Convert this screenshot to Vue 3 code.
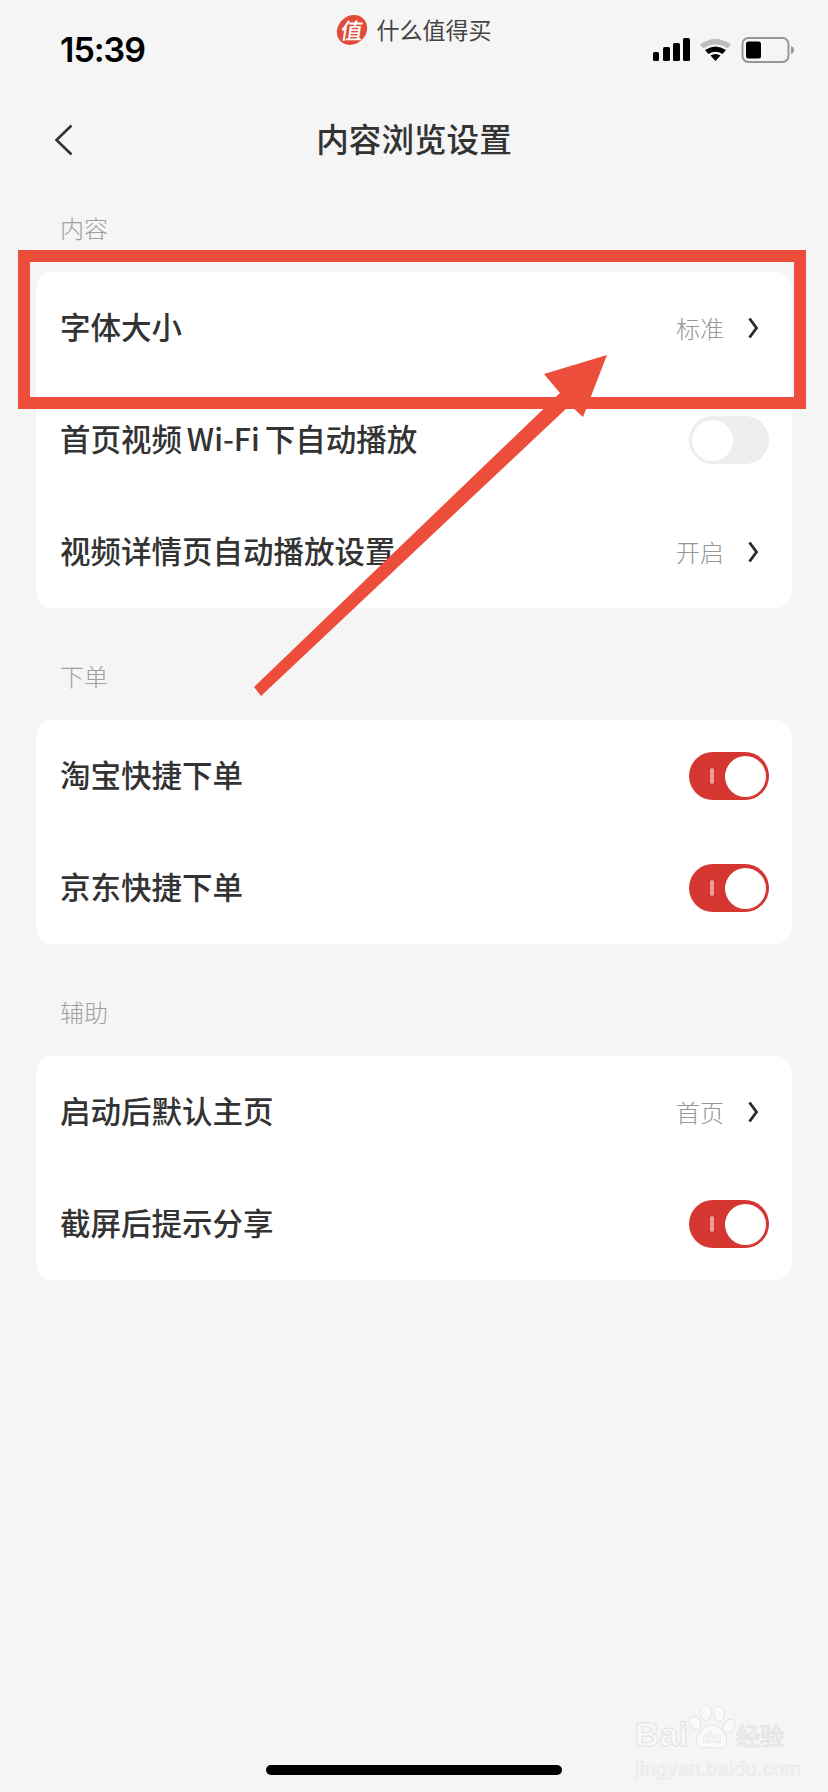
<script setup>
const groups = [
  {
    title: '内容',
    rows: [
      { label: '字体大小', value: '标准' },
      { label: '首页视频 Wi-Fi 下自动播放', on: false },
      { label: '视频详情页自动播放设置', value: '开启' }
    ]
  },
  {
    title: '下单',
    rows: [
      { label: '淘宝快捷下单', on: true },
      { label: '京东快捷下单', on: true }
    ]
  },
  {
    title: '辅助',
    rows: [
      { label: '启动后默认主页', value: '首页' },
      { label: '截屏后提示分享', on: true }
    ]
  }
]
</script>

<template>
  <div class="page">
    <header class="status">
      <span class="time">15:39</span>
      <div class="source">
        <span class="logo">值</span>
        <span class="source-name">什么值得买</span>
      </div>
      <svg class="status-icons" width="142" height="26" viewBox="0 0 142 26">
        <rect x="1" y="15" width="6" height="9" rx="1.5" fill="#000" />
        <rect x="11" y="10" width="7" height="14" rx="1.5" fill="#000" />
        <rect x="21" y="6" width="7" height="18" rx="1.5" fill="#000" />
        <rect x="31" y="1" width="7" height="23" rx="1.5" fill="#000" />
        <path d="M48 7.5 Q63.5 -3.5 79 7.5 L75.5 11.5 Q63.5 3.5 51.5 11.5 Z" fill="#bdbdbd" />
        <path d="M53 13 Q63.5 6 74 13 L70.5 17 Q63.5 12.5 56.5 17 Z" fill="#000" />
        <path d="M58.5 18.5 Q63.5 15.5 68.5 18.5 L63.5 24 Z" fill="#000" />
        <rect x="90.5" y="1" width="46" height="24" rx="6" fill="none" stroke="#969696" stroke-width="2" />
        <rect x="94" y="4.5" width="15" height="17" rx="2.5" fill="#000" />
        <path d="M139 9 Q142 10 142 13 Q142 16 139 17 Z" fill="#969696" />
      </svg>
    </header>

    <nav class="nav">
      <svg class="back" width="20" height="32" viewBox="0 0 20 32">
        <path d="M17.5 1.5 L2.5 16 L17.5 30.5" fill="none" stroke="#333" stroke-width="2.6" />
      </svg>
      <h1 class="nav-title">内容浏览设置</h1>
    </nav>

    <section v-for="group in groups" :key="group.title" class="group">
      <div class="group-title">{{ group.title }}</div>
      <div class="card">
        <div v-for="row in group.rows" :key="row.label" class="row">
          <span class="row-label">{{ row.label }}</span>
          <template v-if="row.value">
            <span class="row-value">{{ row.value }}</span>
            <svg class="chevron" width="12" height="22" viewBox="0 0 12 22">
              <path d="M2.5 1.5 L9.5 11 L2.5 20.5" fill="none" stroke="#2b2b2b" stroke-width="2.8" />
            </svg>
          </template>
          <span v-else class="switch" :class="{ on: row.on }">
            <i v-if="row.on" class="switch-mark"></i>
            <i class="knob"></i>
          </span>
        </div>
      </div>
    </section>

    <div class="home-bar"></div>

    <!-- annotation drawn over the screenshot -->
    <svg class="annotation" width="828" height="720" viewBox="0 0 828 720">
      <rect x="24" y="256" width="776" height="147" fill="none" stroke="#ec4e3b" stroke-width="12" />
      <path d="M607 355 L544 374 L560 393 L254 687 L261 696 L570 405 L583 417 Z" fill="#ec4e3b" />
    </svg>

    <div class="watermark">
      <div class="wm-top">
        <span class="wm-bai">Bai</span>
        <svg class="wm-paw" width="46" height="46" viewBox="0 0 46 46">
          <g fill="#fafafa" stroke="#e4e4e4" stroke-width="1">
            <ellipse cx="6" cy="18" rx="5.5" ry="7" transform="rotate(-30 6 18)" />
            <ellipse cx="17" cy="8" rx="5.5" ry="7.5" />
            <ellipse cx="30" cy="9" rx="5.5" ry="7.5" />
            <ellipse cx="40" cy="21" rx="5.5" ry="7" transform="rotate(25 40 21)" />
            <path d="M23 20 C31 20 40 31 37 39 C34 46 27 42 23 42 C18 42 11 46 8 39 C5 31 15 20 23 20 Z" />
          </g>
          <text x="23" y="38" class="wm-du">du</text>
        </svg>
        <span class="wm-cn">经验</span>
      </div>
      <div class="wm-url">jingyan.baidu.com</div>
    </div>
  </div>
</template>

<style scoped>
* {
  box-sizing: border-box;
}
.page {
  position: relative;
  width: 828px;
  height: 1792px;
  overflow: hidden;
  background: #f5f5f5;
  font-family: "Noto Sans CJK SC", "Liberation Sans", sans-serif;
  color: #333;
}
.status {
  display: grid;
  grid-template-columns: 1fr auto 1fr;
  height: 100px;
  padding: 0 34px;
}
.time {
  margin: 27px 0 0 26px;
  font: 600 34px/46px "Inter", "Liberation Sans", sans-serif;
  letter-spacing: -1px;
  color: #000;
}
.source {
  display: flex;
  align-items: center;
  gap: 10px;
  height: 32px;
  margin-top: 14px;
}
.logo {
  width: 30px;
  height: 30px;
  border-radius: 50%;
  background: #e04c38;
  color: #fff;
  font-size: 22px;
  line-height: 29px;
  text-align: center;
  font-weight: 500;
  transform: skewX(-8deg);
}
.source-name {
  margin-top: -2px;
  font-size: 23px;
  line-height: 32px;
  color: #444;
}
.status-icons {
  justify-self: end;
  margin-top: 37px;
}
.nav {
  position: relative;
  display: flex;
  align-items: center;
  justify-content: center;
  height: 80px;
}
.back {
  position: absolute;
  left: 54px;
  top: 24px;
}
.nav-title {
  margin: -4px 0 0;
  font-size: 32.6px;
  line-height: 44px;
  font-weight: 500;
  color: #333;
}
.group {
  padding: 32px 36px 20px;
}
.group-title {
  height: 34px;
  margin-bottom: 26px;
  padding-left: 24px;
  font-size: 24px;
  line-height: 32px;
  font-weight: 300;
  color: #9f9f9f;
}
.card {
  background: #fff;
  border-radius: 16px;
}
.row {
  display: flex;
  align-items: center;
  height: 112px;
  padding: 0 23px 0 24px;
}
.row-label {
  flex: 1;
  margin-top: -4px;
  font-size: 30.5px;
  line-height: 42px;
  font-weight: 500;
  word-spacing: -2px;
  color: #333;
}
.row-value {
  font-size: 24px;
  line-height: 34px;
  font-weight: 300;
  color: #969696;
}
.chevron {
  margin: 0 10px 0 23px;
}
.switch {
  position: relative;
  display: flex;
  align-items: center;
  justify-content: flex-start;
  width: 80px;
  height: 48px;
  padding: 3px;
  border-radius: 24px;
  background: #eee;
}
.switch.on {
  justify-content: flex-end;
  background: #d4372f;
}
.switch-mark {
  position: absolute;
  left: 21px;
  top: 16px;
  width: 4px;
  height: 16px;
  border-radius: 2px;
  background: #ee9a96;
}
.knob {
  width: 41px;
  height: 41px;
  border-radius: 50%;
  background: #fff;
}
.home-bar {
  position: absolute;
  left: 266px;
  bottom: 17px;
  width: 296px;
  height: 10px;
  border-radius: 5px;
  background: #000;
}
.annotation {
  position: absolute;
  left: 0;
  top: 0;
}
.watermark {
  position: absolute;
  left: 635px;
  top: 1703px;
  width: 150px;
  color: #f9f9f9;
}
.wm-top {
  display: flex;
  align-items: flex-end;
  height: 48px;
}
.wm-bai {
  font: 700 34px/34px "Liberation Sans", sans-serif;
  -webkit-text-stroke: 1px #e2e2e2;
}
.wm-paw {
  flex: none;
  margin: 0 1px 0 1px;
}
.wm-du {
  font: 700 15px "Liberation Sans", sans-serif;
  text-anchor: middle;
  fill: #fafafa;
  stroke: #dedede;
  stroke-width: 0.5px;
}
.wm-cn {
  font-size: 24px;
  line-height: 32px;
  white-space: nowrap;
  -webkit-text-stroke: 1px #e2e2e2;
}
.wm-url {
  margin-top: 6px;
  font: 400 20px/24px "Liberation Sans", sans-serif;
  letter-spacing: 0.3px;
  white-space: nowrap;
  color: #f7f7f7;
  -webkit-text-stroke: 0.6px #e4e4e4;
}
</style>
